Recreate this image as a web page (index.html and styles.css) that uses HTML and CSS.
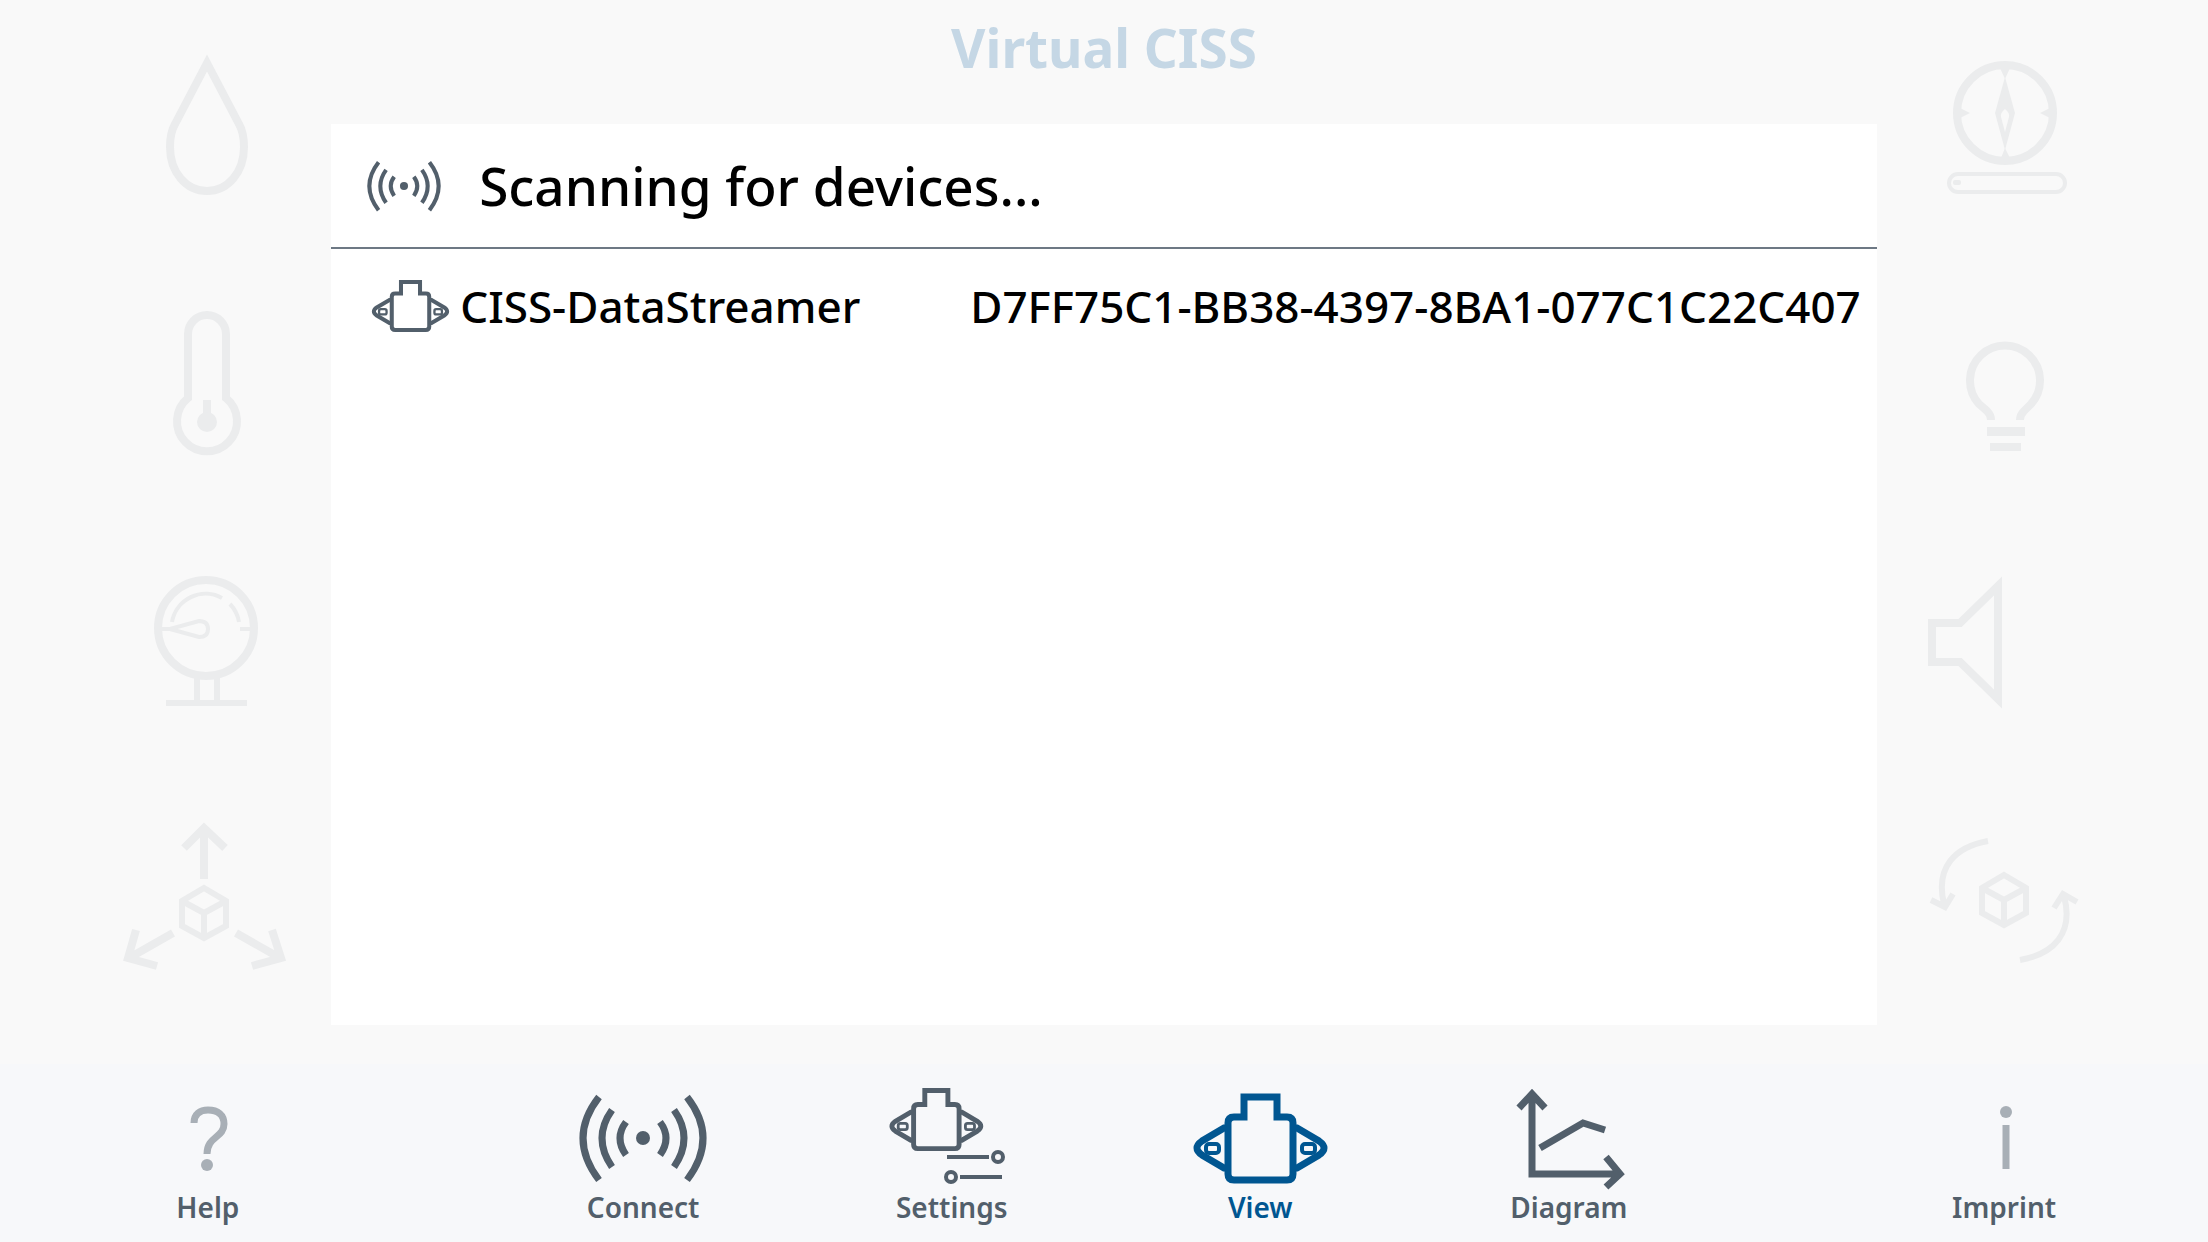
FILE: index.html
```html
<!DOCTYPE html>
<html lang="en">
<head>
    <meta charset="UTF-8">
    <meta name="viewport" content="width=device-width, initial-scale=1.0">
    <title>Virtual CISS</title>
    <link rel="stylesheet" href="styles.css">
</head>
<body>
    <!-- shapes that are used more than once -->
    <svg class="defs" aria-hidden="true">
        <defs>
            <g id="sensor">
                <path d="M54 35V15H87V35H97Q103 35 103 41V92Q103 98 97 98H44Q38 98 38 92V41Q38 35 44 35Z"/>
                <path d="M38 46H34L12 59Q2 66 12 73L34 86H38M103 46H107L129 59Q139 66 129 73L107 86H103"/>
                <rect class="hole" x="16" y="62" width="13" height="9" rx="3"/>
                <rect class="hole" x="112" y="62" width="13" height="9" rx="3"/>
            </g>
            <g id="waves">
                <path d="M26 15Q-6 56 26 98M39 28Q19 56 39 85M53 40Q41 56 53 73"/>
                <path d="M114 15Q146 56 114 98M101 28Q121 56 101 85M87 40Q99 56 87 73"/>
                <circle class="solid" cx="70" cy="56" r="7"/>
            </g>
            <path id="cube" d="M0 -25L22 -12V13L0 25L-22 13V-12ZM-22 -12L0 0L22 -12M0 0V25"/>
        </defs>
    </svg>

    <main class="stage">
        <aside class="sensors left">
            <svg viewBox="0 0 180 180">
                <path d="M92 25L60 86C56 93 55 100 55 109C55 134 71 153 92 153S129 134 129 109C129 100 128 93 124 86Z"/>
            </svg>
            <svg viewBox="0 0 180 180">
                <path d="M73 104V40A19 19 0 0 1 111 40V104A30 30 0 1 1 73 104Z"/>
                <path d="M92 106V124"/>
                <circle class="solid" cx="92" cy="128" r="10"/>
            </svg>
            <svg viewBox="0 0 180 180">
                <circle cx="91" cy="77" r="48"/>
                <path class="thin" d="M57 71A34 34 0 0 1 107 47M115 53A34 34 0 0 1 124 71M125 78H137M45 78H55L84 70Q93 70 93 78T84 86L55 78"/>
                <path class="medium" d="M82 127V150M102 127V150M51 152H132"/>
            </svg>
            <svg viewBox="0 0 180 180">
                <path d="M89 72V22M69 41L89 21L110 41M58 126L14 151M21 123L13 151L42 159M121 126L165 151M157 123L166 151L137 159"/>
                <use class="medium" href="#cube" x="89" y="106"/>
            </svg>
        </aside>

        <section class="center">
            <h1>Virtual CISS</h1>
            <div class="panel">
                <div class="panel-header">
                    <svg class="scan-icon" viewBox="6 11 128 90"><use href="#waves"/></svg>
                    <h2>Scanning for devices...</h2>
                </div>
                <button class="device">
                    <svg class="device-icon" viewBox="2 10 137 93"><use href="#sensor"/></svg>
                    <span class="device-name">CISS-DataStreamer</span>
                    <span class="device-id">D7FF75C1-BB38-4397-8BA1-077C1C22C407</span>
                </button>
            </div>
        </section>

        <aside class="sensors right">
            <svg viewBox="0 0 180 180">
                <circle cx="92" cy="75" r="48"/>
                <path class="solid" d="M87 30H97L92 41ZM88 120H97L92 110ZM47 70L57 75L47 80ZM137 70L127 75L137 80Z"/>
                <path class="solid" fill-rule="evenodd" d="M92 39L102 75L92 112L82 75ZM92 71Q87 75 88 79L92 94L96 79Q97 75 92 71Z"/>
                <rect class="thin" x="36" y="136" width="116" height="18" rx="9"/>
                <rect class="solid" x="40" y="142" width="8" height="5" rx="2"/>
            </svg>
            <svg viewBox="0 0 180 180">
                <path d="M78 126Q78 121 74 117L66 110A35 35 0 1 1 118 110L111 117Q107 121 107 126"/>
                <path class="solid" d="M74 133H112V142H74ZM77 149H108V157H77Z"/>
            </svg>
            <svg viewBox="0 0 180 180">
                <path d="M19 72H47L85 35V148L47 111H19Z"/>
            </svg>
            <svg viewBox="0 0 180 180">
                <path class="medium" d="M75 34C42 40 22 60 31 97M18 93L32 100L40 87M107 153C141 147 161 126 151 89M141 101L150 87L164 95"/>
                <use class="medium" href="#cube" x="91" y="93"/>
            </svg>
        </aside>
    </main>

    <nav class="toolbar">
        <button class="tool side muted">
            <svg viewBox="0 0 140 104">
                <path d="M56 41C56 32 62 28 70 28C80 28 86 33 86 42C86 56 69 54 69 72"/>
                <circle class="solid" cx="69" cy="83" r="6"/>
            </svg>
            <span>Help</span>
        </button>
        <div class="tools">
            <button class="tool">
                <svg viewBox="0 0 140 104"><use href="#waves"/></svg>
                <span>Connect</span>
            </button>
            <button class="tool">
                <svg viewBox="0 0 140 104">
                    <use href="#sensor" transform="translate(5 -2) scale(.7)"/>
                    <path class="thin" d="M65 75H107M78 95H120"/>
                    <circle class="thin" cx="116" cy="75" r="5"/>
                    <circle class="thin" cx="69" cy="95" r="5"/>
                </svg>
                <span>Settings</span>
            </button>
            <button class="tool active">
                <svg viewBox="0 0 140 104"><use href="#sensor"/></svg>
                <span>View</span>
            </button>
            <button class="tool">
                <svg viewBox="0 0 140 104">
                    <path d="M20 26L33 12L46 26M33 12V92H121M107 75L121 92L107 105M41 66L84 41L106 48"/>
                </svg>
                <span>Diagram</span>
            </button>
        </div>
        <button class="tool side muted">
            <svg viewBox="0 0 140 104">
                <circle class="solid" cx="72" cy="30" r="6"/>
                <path d="M72 43V87"/>
            </svg>
            <span>Imprint</span>
        </button>
    </nav>
</body>
</html>
```

FILE: styles.css
```css
* {
    box-sizing: border-box;
}
body {
    margin: 0;
    min-height: 100vh;
    display: flex;
    flex-direction: column;
    background-color: #f9f9f9;
    font-family: 'Noto Sans', 'Open Sans', sans-serif;
    color: #000;
}
h1, h2 {
    margin: 0;
}
button {
    border: none;
    background: none;
    padding: 0;
    font-family: inherit;
    color: inherit;
    cursor: pointer;
}

/* icons */
svg {
    fill: none;
    stroke: currentColor;
    stroke-width: 7px;
    overflow: visible;
    flex-shrink: 0;
}
.defs {
    position: absolute;
    width: 0;
    height: 0;
}
.solid {
    fill: currentColor;
    stroke: none;
}
.medium {
    stroke-width: 6px;
}
.thin {
    stroke-width: 4px;
}
.hole {
    stroke-width: 4px;
}

/* main area */
.stage {
    flex: 1;
    display: grid;
    grid-template-columns: 15% 70% 15%;
    padding-bottom: 39px;
}
.sensors {
    display: grid;
    grid-template-rows: repeat(4, 1fr);
    align-items: center;
    padding: 0 36px;
    color: #ebeced;
}
.sensors svg {
    width: 180px;
    height: 180px;
    stroke-width: 8px;
}
.sensors.left {
    justify-content: end;
}
.sensors.right {
    justify-content: start;
}
.center {
    display: flex;
    flex-direction: column;
}
h1 {
    height: 124px;
    padding-top: 12px;
    font-size: 53px;
    line-height: 72px;
    text-align: center;
    color: #c5d7e5;
}
.panel {
    flex: 1;
    background-color: #fff;
}
.panel-header {
    display: flex;
    align-items: center;
    gap: 38px;
    height: 125px;
    padding-left: 36px;
    border-bottom: 2px solid #6d7884;
}
h2 {
    font-size: 53px;
    line-height: 72px;
    font-weight: 500;
}
.scan-icon {
    width: 74px;
    height: 52px;
    color: #525f6b;
}
.device {
    display: flex;
    align-items: center;
    width: 100%;
    height: 114px;
    padding: 0 16px 0 40px;
    font-size: 44px;
    font-weight: 500;
    gap: 10px;
}
.device-icon {
    width: 79px;
    height: 54px;
    color: #525f6b;
}
.device-id {
    margin-left: auto;
}

/* bottom bar */
.toolbar {
    display: flex;
    justify-content: space-between;
    height: 178px;
    padding-left: 4px;
    background-color: #f7f8fa;
    color: #525f6b;
}
.tools {
    display: flex;
    width: 56%;
}
.tool {
    flex: 1;
    display: flex;
    flex-direction: column;
    align-items: center;
    padding-top: 18px;
    font-size: 28px;
    line-height: 42px;
    font-weight: 600;
}
.tool svg {
    width: 140px;
    height: 104px;
}
.tool.side {
    flex: 0 0 18.5%;
}
.muted svg {
    color: #a8afb6;
}
.active {
    color: #005691;
}
```
